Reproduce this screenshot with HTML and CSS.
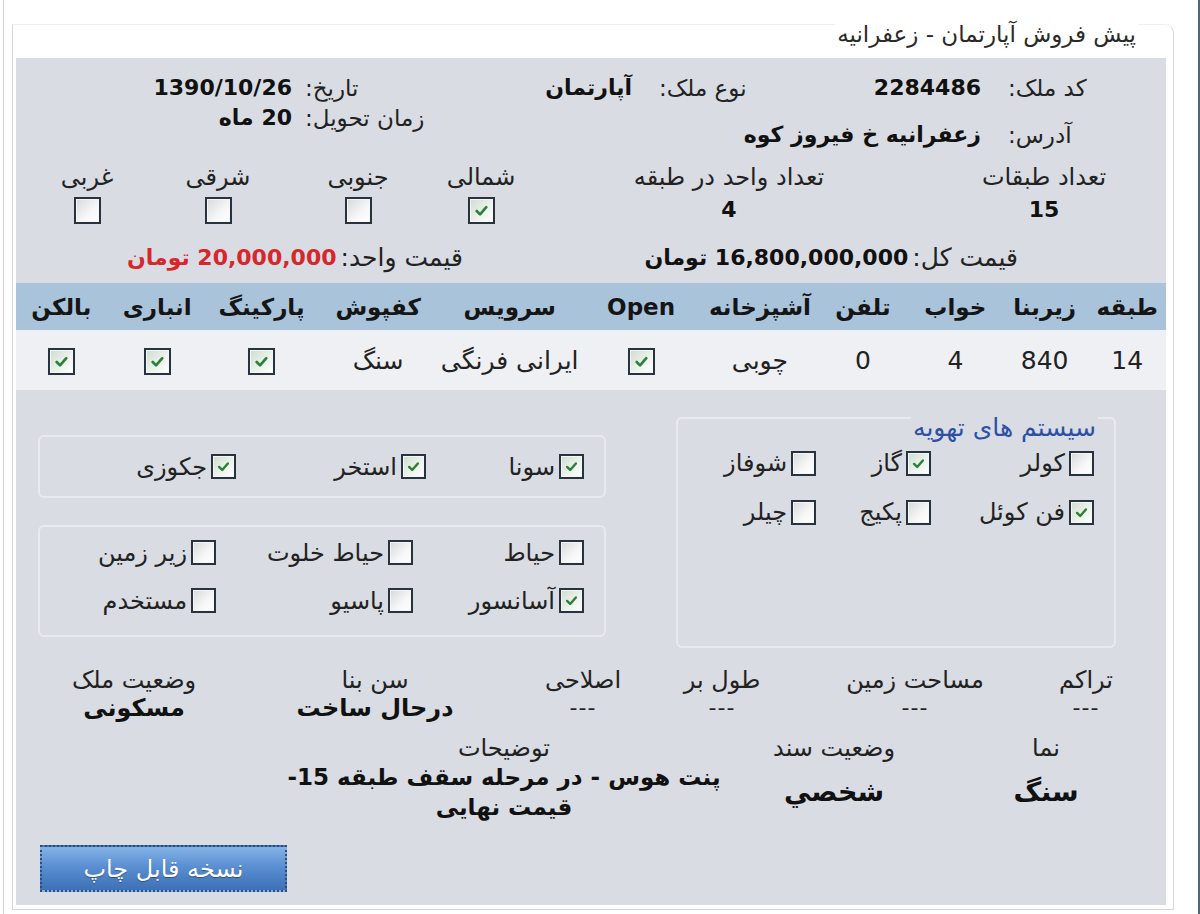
FILE: index.html
```html
<!DOCTYPE html>
<html lang="fa" dir="rtl">
<head>
<meta charset="utf-8">
<title>پیش فروش آپارتمان - زعفرانیه</title>
<link rel="stylesheet" href="styles.css">
</head>
<body>
<div class="window">
  <fieldset class="main">
    <legend class="main-title">پیش فروش آپارتمان - زعفرانیه</legend>
    <div class="panel">

      <div class="top">
        <div class="top-main">
          <span class="lbl l1">کد ملک:</span><span class="val">2284486</span>
          <span class="lbl l2">نوع ملک:</span><span class="val">آپارتمان</span>
          <span class="lbl l1">آدرس:</span><span class="val addr">زعفرانیه خ فیروز کوه</span>
        </div>
        <div class="top-side">
          <span class="lbl">تاریخ:</span><span class="val">1390/10/26</span>
          <span class="lbl">زمان تحویل:</span><span class="val">20 ماه</span>
        </div>
      </div>

      <div class="dirs">
        <span class="lbl">تعداد طبقات</span>
        <span class="lbl">تعداد واحد در طبقه</span>
        <span class="lbl">شمالی</span>
        <span class="lbl">جنوبی</span>
        <span class="lbl">شرقی</span>
        <span class="lbl">غربی</span>
        <span class="val">15</span>
        <span class="val">4</span>
        <span class="cell"><span class="cb on"><svg viewBox="0 0 24 24"><path d="M7 12.5 10.5 16 17 8.5"/></svg></span></span>
        <span class="cell"><span class="cb"></span></span>
        <span class="cell"><span class="cb"></span></span>
        <span class="cell"><span class="cb"></span></span>
      </div>

      <div class="prices">
        <div class="pair"><span class="lbl">قیمت کل:</span><span class="val">16,800,000,000 تومان</span></div>
        <div class="pair"><span class="lbl">قیمت واحد:</span><span class="val red">20,000,000 تومان</span></div>
      </div>

      <table class="units">
        <colgroup>
          <col class="c1"><col class="c2"><col class="c3"><col class="c4"><col class="c5"><col class="c6"><col class="c7"><col class="c8"><col class="c9"><col class="c10"><col class="c11">
        </colgroup>
        <thead>
          <tr>
            <th>طبقه</th><th>زیربنا</th><th>خواب</th><th>تلفن</th><th>آشپزخانه</th><th>Open</th><th>سرویس</th><th>کفپوش</th><th>پارکینگ</th><th>انباری</th><th>بالکن</th>
          </tr>
        </thead>
        <tbody>
          <tr>
            <td>14</td><td>840</td><td>4</td><td>0</td><td>چوبی</td>
            <td><span class="cb on"><svg viewBox="0 0 24 24"><path d="M7 12.5 10.5 16 17 8.5"/></svg></span></td>
            <td>ایرانی فرنگی</td><td>سنگ</td>
            <td><span class="cb on"><svg viewBox="0 0 24 24"><path d="M7 12.5 10.5 16 17 8.5"/></svg></span></td>
            <td><span class="cb on"><svg viewBox="0 0 24 24"><path d="M7 12.5 10.5 16 17 8.5"/></svg></span></td>
            <td><span class="cb on"><svg viewBox="0 0 24 24"><path d="M7 12.5 10.5 16 17 8.5"/></svg></span></td>
          </tr>
        </tbody>
      </table>

      <div class="lower">
        <fieldset class="vent">
          <legend class="vent-title">سیستم های تهویه</legend>
          <div class="vent-grid">
            <span class="chk"><span class="cb sm"></span>کولر</span>
            <span class="chk"><span class="cb sm on"><svg viewBox="0 0 24 24"><path d="M7 12.5 10.5 16 17 8.5"/></svg></span>گاز</span>
            <span class="chk"><span class="cb sm"></span>شوفاز</span>
            <span class="chk"><span class="cb sm on"><svg viewBox="0 0 24 24"><path d="M7 12.5 10.5 16 17 8.5"/></svg></span>فن کوئل</span>
            <span class="chk"><span class="cb sm"></span>پکیج</span>
            <span class="chk"><span class="cb sm"></span>چیلر</span>
          </div>
        </fieldset>

        <div class="amen">
          <div class="box box1">
            <span class="chk"><span class="cb sm on"><svg viewBox="0 0 24 24"><path d="M7 12.5 10.5 16 17 8.5"/></svg></span>سونا</span>
            <span class="chk"><span class="cb sm on"><svg viewBox="0 0 24 24"><path d="M7 12.5 10.5 16 17 8.5"/></svg></span>استخر</span>
            <span class="chk"><span class="cb sm on"><svg viewBox="0 0 24 24"><path d="M7 12.5 10.5 16 17 8.5"/></svg></span>جکوزی</span>
          </div>
          <div class="box box2">
            <span class="chk"><span class="cb sm"></span>حیاط</span>
            <span class="chk"><span class="cb sm"></span>حیاط خلوت</span>
            <span class="chk"><span class="cb sm"></span>زیر زمین</span>
            <span class="chk"><span class="cb sm on"><svg viewBox="0 0 24 24"><path d="M7 12.5 10.5 16 17 8.5"/></svg></span>آسانسور</span>
            <span class="chk"><span class="cb sm"></span>پاسیو</span>
            <span class="chk"><span class="cb sm"></span>مستخدم</span>
          </div>
        </div>
      </div>

      <div class="info1">
        <div class="item"><span class="lbl">تراکم</span><span class="dash">---</span></div>
        <div class="item"><span class="lbl">مساحت زمین</span><span class="dash">---</span></div>
        <div class="item"><span class="lbl">طول بر</span><span class="dash">---</span></div>
        <div class="item"><span class="lbl">اصلاحی</span><span class="dash">---</span></div>
        <div class="item"><span class="lbl">سن بنا</span><span class="val">درحال ساخت</span></div>
        <div class="item"><span class="lbl">وضعیت ملک</span><span class="val">مسکونی</span></div>
      </div>

      <div class="info2">
        <div class="item"><span class="lbl">نما</span><div class="vbox"><span class="val big">سنگ</span></div></div>
        <div class="item"><span class="lbl">وضعیت سند</span><div class="vbox"><span class="val big">شخصي</span></div></div>
        <div class="item"><span class="lbl">توضیحات</span><div class="vbox"><span class="val desc">پنت هوس - در مرحله سقف طبقه 15-<br>قیمت نهایی</span></div></div>
      </div>

      <div class="btn-row">
        <button class="print-btn" type="button">نسخه قابل چاپ</button>
      </div>

    </div>
  </fieldset>
</div>
</body>
</html>
```
FILE: styles.css
```css
html, body {
  margin: 0;
  padding: 0;
  background: #ffffff;
}

body {
  font-family: "DejaVu Sans", "Noto Sans", sans-serif;
  color: #1b1b1b;
  font-size: 22px;
}

.window {
  height: 914px;
  box-sizing: border-box;
  margin-left: 3px;
  border-left: 1px solid #d2d4d6;
  border-right: 2px solid #52667c;
  padding: 2px 24px 0 8px;
  overflow: hidden;
}

fieldset.main {
  margin: 0;
  border: 1px solid #d6d8db;
  border-top-color: #eeeff0;
  border-radius: 0 9px 0 0;
  padding: 12px 7px 4px 3px;
  min-width: 0;
}

.main-title {
  margin-right: 28px;
  padding: 20px 2px 0;
  line-height: 24px;
  font-size: 23px;
  color: #2a2a2a;
}

.panel {
  background: #d9dde3;
  padding-bottom: 13px;
}

.lbl {
  font-size: 23px;
  font-weight: normal;
  color: #222;
  white-space: nowrap;
}

.val {
  font-size: 22px;
  font-weight: bold;
  color: #111;
  white-space: nowrap;
}

.red {
  color: #d8262b;
}

/* ---------- top info ---------- */
.top {
  display: flex;
  padding-top: 15px;
}

.top-main {
  flex: 0 0 735px;
  box-sizing: border-box;
  padding-right: 70px;
  display: grid;
  grid-template-columns: 115px 222px 127px 1fr;
  row-gap: 17px;
  line-height: 30px;
}

.top-main .lbl {
  text-align: left;
  padding-left: 27px;
}

.top-main .addr {
  grid-column: 2 / span 3;
}

.top-side {
  flex: 1;
  display: grid;
  grid-template-columns: 134px 1fr;
  align-content: start;
  line-height: 30px;
}

.top-side .lbl {
  text-align: left;
  padding-left: 8px;
}

.top-side .val {
  padding-right: 5px;
}

/* ---------- directions ---------- */
.dirs {
  display: grid;
  grid-template-columns: 244px 386px 110px 136px 144px 118px;
  grid-template-rows: 30px 30px;
  row-gap: 3px;
  margin-top: 12px;
  text-align: center;
  line-height: 30px;
}

.dirs .lbl {
  font-size: 24px;
}

.dirs .cell {
  display: flex;
  align-items: center;
  justify-content: center;
}

/* ---------- prices ---------- */
.prices {
  display: grid;
  grid-template-columns: 555px auto;
  padding-right: 148px;
  margin-top: 18px;
  line-height: 30px;
}

.prices .lbl {
  font-size: 25px;
}

.pair {
  display: flex;
  gap: 4px;
}

/* ---------- checkbox ---------- */
.cb {
  display: inline-block;
  width: 27px;
  height: 27px;
  box-sizing: border-box;
  border: 2px solid #27333f;
  box-shadow: inset 0 0 0 1px #f4f5f4;
  background: linear-gradient(135deg, #d5d8db 0%, #f7f7f7 60%, #ffffff 100%);
  vertical-align: middle;
  flex: none;
}

.cb.on {
  background: linear-gradient(135deg, #cfdccf 0%, #eef4ee 60%, #ffffff 100%);
}

.cb svg {
  display: block;
  width: 100%;
  height: 100%;
}

.cb svg path {
  fill: none;
  stroke: #2f7f3c;
  stroke-width: 2.8;
  stroke-linecap: round;
  stroke-linejoin: round;
}

.cb.sm {
  width: 25px;
  height: 25px;
}

/* ---------- table ---------- */
.units {
  width: 100%;
  margin-top: 10px;
  border-collapse: collapse;
  table-layout: fixed;
}

.units .c1 { width: 77.5px; }
.units .c2 { width: 87.5px; }
.units .c3 { width: 91px; }
.units .c4 { width: 93.5px; }
.units .c5 { width: 112.5px; }
.units .c6 { width: 125px; }
.units .c7 { width: 137.5px; }
.units .c8 { width: 125.5px; }
.units .c9 { width: 107.5px; }
.units .c10 { width: 101px; }
.units .c11 { width: 90.5px; }

.units th {
  background: #a9c3db;
  height: 47px;
  padding: 0;
  font-size: 23px;
  font-weight: bold;
  color: #151515;
  white-space: nowrap;
}

.units td {
  background: #eff0f3;
  height: 60px;
  padding: 0;
  text-align: center;
  font-size: 25px;
  color: #222;
  white-space: nowrap;
}

/* ---------- lower boxes ---------- */
.lower {
  display: flex;
  align-items: flex-start;
  gap: 70px;
  padding: 7px 50px 0 21px;
}

.vent {
  flex: 0 0 440px;
  box-sizing: border-box;
  margin: 0;
  min-width: 0;
  border: 2px solid #e8eaed;
  border-radius: 6px;
  padding: 10px 20px 0 0;
}

.vent-title {
  margin-right: -4px;
  padding: 20px 2px 0;
  line-height: 22px;
  font-size: 25px;
  color: #2d4fa6;
}

.vent-grid {
  display: grid;
  grid-template-columns: 163px 115px 1fr;
  grid-auto-rows: 28px;
  row-gap: 21px;
  align-content: start;
  height: 197px;
}

.chk {
  display: flex;
  align-items: center;
  gap: 4px;
  font-size: 24px;
  line-height: 28px;
  color: #222;
  white-space: nowrap;
}

.amen {
  flex: 0 0 568px;
  padding-top: 38px;
}

.box {
  box-sizing: border-box;
  border: 2px solid #e8eaed;
  border-radius: 6px;
  display: grid;
}

.box1 {
  height: 63px;
  grid-template-columns: 158px 190px 1fr;
  align-items: center;
  padding-right: 20px;
}

.box2 {
  height: 112px;
  margin-top: 27px;
  grid-template-columns: 171px 197px 1fr;
  grid-auto-rows: 25px;
  row-gap: 23px;
  padding: 13px 20px 0 0;
}

/* ---------- info rows ---------- */
.info1 {
  display: grid;
  grid-template-columns: 160px 182px 204px 74px 342px 140px;
  margin-top: 18px;
}

.item {
  display: flex;
  flex-direction: column;
  align-items: center;
  line-height: 28px;
}

.item .lbl {
  font-size: 24px;
}

.item .val {
  font-size: 24px;
}

.dash {
  font-size: 22px;
  letter-spacing: 1px;
  color: #222;
}

.info2 {
  display: grid;
  grid-template-columns: 240px 184px 476px;
  margin-top: 12px;
}

.vbox {
  height: 60px;
  display: flex;
  align-items: center;
  justify-content: center;
  text-align: center;
}

.item .val.big {
  font-size: 27px;
}

.item .val.desc {
  font-size: 23px;
  line-height: 30px;
  white-space: normal;
}

/* ---------- button ---------- */
.btn-row {
  display: flex;
  justify-content: flex-end;
  padding-left: 24px;
  margin-top: 23px;
}

.print-btn {
  width: 247px;
  height: 47px;
  box-sizing: border-box;
  border: 2px dotted #2e4c78;
  background: linear-gradient(180deg, #84b3e6 0%, #5a8fd2 45%, #3d70b6 100%);
  color: #ffffff;
  font-family: "DejaVu Sans", sans-serif;
  font-size: 24px;
  text-shadow: 0 1px 1px rgba(0, 0, 0, 0.35);
  padding: 0;
}
```
